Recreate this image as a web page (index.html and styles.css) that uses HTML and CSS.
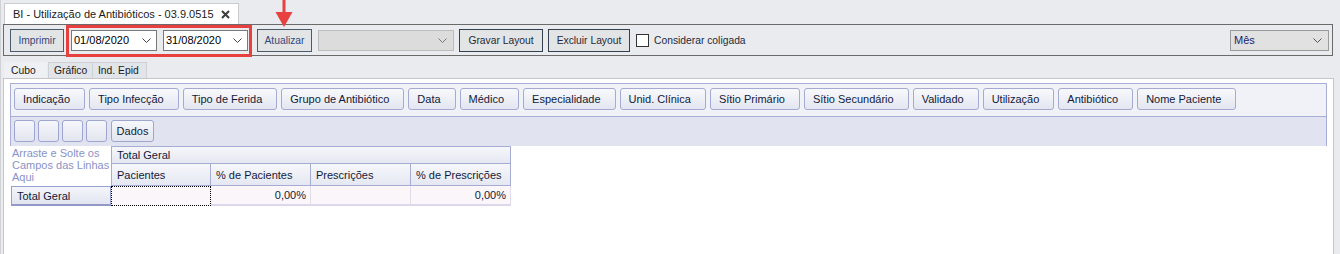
FILE: index.html
```html
<!DOCTYPE html>
<html lang="pt-BR">
<head>
<meta charset="utf-8">
<title>BI - Utilização de Antibióticos</title>
<link rel="stylesheet" href="styles.css">
</head>
<body>
<div class="app">
  <div class="doctabs">
    <div class="doctab">
      <span class="doctab-title">BI - Utilização de Antibióticos - 03.9.0515</span>
      <svg class="close" width="9" height="9" viewBox="0 0 9 9"><path d="M1 1 L8 8 M8 1 L1 8" stroke="#3c3c3c" stroke-width="2" fill="none"/></svg>
    </div>
    <svg class="arrow" width="18" height="27" viewBox="0 0 18 27"><rect x="7.5" y="0" width="3" height="14" fill="#e8413f"/><polygon points="0.5,12 17.5,12 9,27" fill="#e8413f"/></svg>
  </div>

  <div class="toolbar">
    <button class="btn btn-blue btn-imprimir">Imprimir</button>
    <div class="daterange">
      <div class="date date-from">01/08/2020<svg class="chev" width="9" height="5" viewBox="0 0 9 5"><polyline points="0.5,0.5 4.5,4.5 8.5,0.5" fill="none" stroke="#444" stroke-width="1"/></svg></div>
      <div class="date date-to">31/08/2020<svg class="chev" width="9" height="5" viewBox="0 0 9 5"><polyline points="0.5,0.5 4.5,4.5 8.5,0.5" fill="none" stroke="#444" stroke-width="1"/></svg></div>
    </div>
    <button class="btn btn-blue btn-atualizar">Atualizar</button>
    <div class="combo combo-disabled"><svg class="chev" width="9" height="5" viewBox="0 0 9 5"><polyline points="0.5,0.5 4.5,4.5 8.5,0.5" fill="none" stroke="#777" stroke-width="1"/></svg></div>
    <button class="btn btn-gravar">Gravar Layout</button>
    <button class="btn btn-excluir">Excluir Layout</button>
    <label class="check"><span class="check-box"></span><span class="check-label">Considerar coligada</span></label>
    <div class="combo combo-mes"><span class="combo-text">Mês</span><svg class="chev" width="9" height="5" viewBox="0 0 9 5"><polyline points="0.5,0.5 4.5,4.5 8.5,0.5" fill="none" stroke="#555" stroke-width="1"/></svg></div>
  </div>

  <div class="tabs">
    <div class="tab tab-active">Cubo</div>
    <div class="tab">Gráfico</div>
    <div class="tab">Ind. Epid</div>
  </div>

  <div class="panel">
    <div class="pivot">
      <div class="fields">
        <div class="field">Indicação</div>
        <div class="field">Tipo Infecção</div>
        <div class="field">Tipo de Ferida</div>
        <div class="field">Grupo de Antibiótico</div>
        <div class="field">Data</div>
        <div class="field">Médico</div>
        <div class="field">Especialidade</div>
        <div class="field">Unid. Clínica</div>
        <div class="field">Sítio Primário</div>
        <div class="field">Sítio Secundário</div>
        <div class="field">Validado</div>
        <div class="field">Utilização</div>
        <div class="field">Antibiótico</div>
        <div class="field">Nome Paciente</div>
      </div>
      <div class="datafields">
        <div class="mini"></div>
        <div class="mini"></div>
        <div class="mini"></div>
        <div class="mini"></div>
        <div class="mini mini-dados">Dados</div>
      </div>
      <div class="grid">
        <div class="drop-hint">Arraste e Solte os Campos das Linhas Aqui</div>
        <div class="hcell hcell-total">Total Geral</div>
        <div class="hcell">Pacientes</div>
        <div class="hcell">% de Pacientes</div>
        <div class="hcell">Prescrições</div>
        <div class="hcell">% de Prescrições</div>
        <div class="rowhead">Total Geral</div>
        <div class="cell cell-focus"></div>
        <div class="cell">0,00%</div>
        <div class="cell"></div>
        <div class="cell">0,00%</div>
      </div>
    </div>
  </div>
</div>
</body>
</html>
```

FILE: styles.css
```css
* { box-sizing: border-box; }

html, body {
  margin: 0;
  padding: 0;
  width: 1340px;
  height: 254px;
  overflow: hidden;
  background: #e9ebef;
  font-family: "Liberation Sans", Arial, sans-serif;
}

.app {
  width: 1340px;
  height: 254px;
  overflow: hidden;
  border-left: 1px solid #d0d2d6;
}

/* document tab strip */
.doctabs {
  position: relative;
  height: 24px;
  padding: 3px 0 0 3px;
  display: flex;
  align-items: flex-end;
}

.doctab {
  width: 235px;
  height: 21px;
  background: #ffffff;
  border: 1px solid #c9cbcf;
  border-bottom: none;
  display: flex;
  align-items: center;
  justify-content: space-between;
  padding: 0 8px 0 8px;
  font-size: 11px;
  color: #1a1a1a;
}

.close { display: block; }

.arrow {
  position: absolute;
  left: 274px;
  top: 0;
  z-index: 5;
}

/* toolbar */
.toolbar {
  height: 32px;
  margin: 0 7px 0 2px;
  border: 1px solid #6a6a6a;
  display: flex;
  align-items: center;
  padding: 0 3px 0 6px;
  font-size: 10.3px;
}

.btn {
  height: 23px;
  margin: 0;
  padding: 0;
  font-family: "Liberation Sans", Arial, sans-serif;
  font-size: 10.3px;
  color: #1f2a38;
  background: #e3e4e6;
  border: 1px solid #33404f;
  display: flex;
  align-items: center;
  justify-content: center;
}

.btn-blue { color: #34497a; border-color: #4c5a6a; }

.btn-imprimir { width: 54px; }
.btn-atualizar { width: 55px; margin-left: 9px; }
.btn-gravar { width: 84px; margin-left: 5px; }
.btn-excluir { width: 82px; margin-left: 5px; }

.daterange {
  position: relative;
  display: flex;
  margin-left: 7px;
}

.daterange::before {
  content: "";
  position: absolute;
  left: -5px;
  top: -5px;
  right: -4px;
  bottom: -6px;
  border: 3px solid #e8403f;
  pointer-events: none;
}

.date {
  height: 21px;
  background: #ffffff;
  border: 1px solid #7a7a7a;
  display: flex;
  align-items: center;
  justify-content: space-between;
  padding: 0 5px 0 2px;
  font-size: 11px;
  color: #000;
}

.date-from { width: 86px; }
.date-to { width: 85px; margin-left: 6px; }

.chev { display: block; }

.combo {
  height: 21px;
  display: flex;
  align-items: center;
  justify-content: flex-end;
  padding: 0 6px 0 3px;
}

.combo-disabled {
  width: 136px;
  margin-left: 6px;
  background: #dcdcdc;
  border: 1px solid #bcbcbc;
}

.combo-mes {
  width: 99px;
  margin-left: auto;
  background: #e1e1e1;
  border: 1px solid #9a9a9a;
  justify-content: space-between;
  font-size: 11px;
  color: #1a2470;
}

.check {
  display: flex;
  align-items: center;
  margin-left: 6px;
}

.check-box {
  width: 13px;
  height: 13px;
  background: #fff;
  border: 1px solid #333;
}

.check-label {
  margin-left: 5px;
  color: #1f2a38;
}

/* view tabs */
.tabs {
  display: flex;
  margin: 6px 0 0 3px;
  height: 16px;
  font-size: 10.3px;
}

.tab {
  height: 16px;
  padding: 2px 0 0 5px;
  background: #e1e4e8;
  border: 1px solid #cdd0d4;
  border-bottom: none;
  color: #1a1a1a;
}

.tab:nth-child(2) { width: 45px; margin-left: 1px; }
.tab:nth-child(3) { width: 54px; border-left: none; }

.tab-active {
  width: 43px;
  background: #eef0f3;
  border-color: #eef0f3;
  padding-left: 6px;
}

/* content panel */
.panel {
  height: 176px;
  margin: 0 6px 0 2px;
  border: 1px solid #c4c6ca;
  border-bottom: none;
  background: #ffffff;
  padding: 4px 6px 0 6px;
}

.pivot {
  font-size: 11px;
  color: #121a3a;
}

.fields {
  height: 34px;
  border: 1px solid #a9aed4;
  background: #f1f2f7;
  display: flex;
  gap: 4px;
  padding: 4px 0 0 3px;
}

.field {
  height: 22px;
  padding: 0 14px 0 8px;
  display: flex;
  align-items: center;
  white-space: nowrap;
  border: 1px solid #a4aad2;
  border-radius: 3px;
  background: linear-gradient(#f8f9fc, #e3e6f0);
}

.datafields {
  height: 29px;
  border-left: 1px solid #a9aed4;
  border-right: 1px solid #a9aed4;
  background: #e1e3f0;
  display: flex;
  gap: 3px;
  padding: 3px 0 0 3px;
}

.mini {
  width: 21px;
  height: 22px;
  border: 1px solid #9ea5cf;
  border-radius: 3px;
  background: linear-gradient(#f6f7fb, #e2e5ef);
}

.mini-dados {
  width: 43px;
  margin-left: 1px;
  display: flex;
  align-items: center;
  justify-content: center;
}

.grid {
  display: grid;
  grid-template-columns: 100px 100px 100px 100px 100px;
  grid-template-rows: 18px 22px 20px;
  margin-left: 1px;
  width: 500px;
}

.drop-hint {
  grid-row: 1 / span 2;
  grid-column: 1;
  padding: 1px 0 0 1px;
  line-height: 12px;
  color: #8a92c8;
}

.hcell {
  border-right: 1px solid #a7acd3;
  border-bottom: 1px solid #a7acd3;
  background: linear-gradient(#f6f7fb, #e5e8f2);
  display: flex;
  align-items: center;
  padding-left: 5px;
  white-space: nowrap;
}

.hcell-total {
  grid-column: 2 / span 4;
  border-left: 1px solid #a7acd3;
  border-top: 1px solid #a7acd3;
}

.hcell:nth-child(3) { border-left: 1px solid #a7acd3; }

.rowhead {
  border: 1px solid #9aa0cc;
  border-bottom: 2px solid #9399c6;
  background: linear-gradient(#f4f5fa, #e2e5f0);
  display: flex;
  align-items: center;
  padding-left: 5px;
}

.cell {
  background: #fbf6fa;
  border-right: 1px solid #e3dcec;
  border-bottom: 2px solid #ddd6ec;
  display: flex;
  align-items: center;
  justify-content: flex-end;
  padding-right: 4px;
}

.cell-focus {
  border: 1px dotted #000;
}
```
